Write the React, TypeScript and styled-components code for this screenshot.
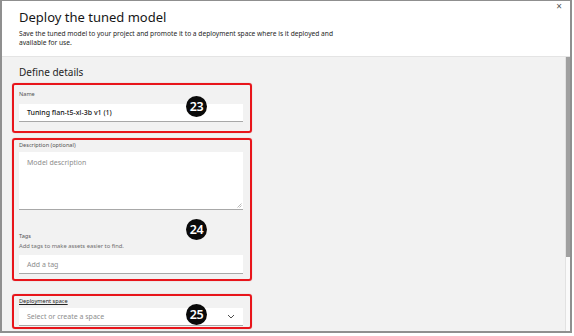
import React from 'react'
import styled, { createGlobalStyle } from 'styled-components'

const GlobalStyle = createGlobalStyle`
    html, body {
        margin: 0;
        padding: 0;
        background: #ffffff;
        font-family: 'Noto Sans', 'Open Sans', sans-serif;
        color: #161616;
    }
    * { box-sizing: border-box; }
`

const Frame = styled.div`
    width: 572px;
    height: 333px;
    border: 2px solid #8f8f8f;
    border-top-width: 1px;
    display: flex;
    flex-direction: column;
    overflow: hidden;
`

const Header = styled.header`
    position: relative;
    height: 56px;
    background: #ffffff;
    padding: 8px 17px 0;
    border-bottom: 1px solid #e4e4e4;
    flex-shrink: 0;
`

const Title = styled.h1`
    margin: 0;
    font-size: 13px;
    font-weight: 400;
    line-height: 17px;
    color: #161616;
`

const Subtitle = styled.p`
    margin: 3px 0 0;
    width: 330px;
    font-size: 6.65px;
    line-height: 9px;
    color: #262626;
`

const Close = styled.span`
    position: absolute;
    top: 0;
    right: 8px;
    font-size: 10px;
    line-height: 10px;
    color: #555;
`

const Body = styled.div`
    flex: 1;
    display: flex;
    background: #f2f2f2;
    min-height: 0;
`

const Content = styled.div`
    flex: 1;
    padding: 8px 0 0 10px;
    display: flex;
    flex-direction: column;
`

const SectionTitle = styled.h2`
    margin: 0 0 4px 7px;
    font-size: 10px;
    font-weight: 400;
    line-height: 14px;
    color: #262626;
`

type TRedBox = { mt?: number; pt?: number; pb?: number }

const RedBox = styled.div<TRedBox>`
    position: relative;
    width: 240px;
    margin-top: ${({ mt = 0 }) => mt}px;
    padding: ${({ pt = 4 }) => pt}px 7px ${({ pb = 4 }) => pb}px 5px;
    border: 2px solid #e8151b;
    border-radius: 3px;
    box-shadow: 0 0 1px rgba(120, 0, 0, 0.4);
    display: flex;
    flex-direction: column;
`

type TLabel = { underline?: boolean; mt?: number }

const Label = styled.label<TLabel>`
    display: block;
    margin-top: ${({ mt = 0 }) => mt}px;
    font-size: 5.6px;
    line-height: 8px;
    color: ${({ underline }) => (underline ? '#262626' : '#525252')};
    text-decoration: ${({ underline }) => (underline ? 'underline' : 'none')};
`

const Helper = styled.div`
    margin-top: 2px;
    font-size: 5.8px;
    line-height: 8px;
    color: #6f6f6f;
`

type TField = { h: number; mt?: number; strong?: boolean }

const Field = styled.div<TField>`
    position: relative;
    height: ${({ h }) => h}px;
    margin-top: ${({ mt = 3 }) => mt}px;
    background: #ffffff;
    border-bottom: 1px solid #a8a8a8;
    padding: 0 8px;
    display: flex;
    align-items: center;
    justify-content: space-between;
    font-size: 7px;
    color: ${({ strong }) => (strong ? '#161616' : '#8d8d8d')};
    font-weight: ${({ strong }) => (strong ? 500 : 400)};
`

const Area = styled(Field)`
    align-items: flex-start;
    padding-top: 6px;
`

const Grip = styled.svg`
    position: absolute;
    right: 1px;
    bottom: 1px;
`

type TBadge = { top: number }

const Badge = styled.div<TBadge>`
    position: absolute;
    left: 172px;
    top: ${({ top }) => top}px;
    width: 21px;
    height: 21px;
    border-radius: 50%;
    background: #0a0a0a;
    color: #ffffff;
    font-size: 12.5px;
    font-weight: 600;
    letter-spacing: -0.5px;
    display: flex;
    align-items: center;
    justify-content: center;
`

const ScrollTrack = styled.div`
    width: 5px;
    flex-shrink: 0;
    background: #fafafa;
    border-left: 1px solid #e2e2e2;
    display: flex;
    flex-direction: column;
`

const ScrollThumb = styled.div`
    height: 200px;
    background: #a0a0a0;
`

const Chevron = () => (
    <svg width="8" height="5" viewBox="0 0 8 5">
        <path d="M1 1 L4 4 L7 1" fill="none" stroke="#393939" strokeWidth="0.9" />
    </svg>
)

export default function App() {
    return (
        <>
            <GlobalStyle />
            <Frame>
                <Header>
                    <Title>Deploy the tuned model</Title>
                    <Subtitle>
                        Save the tuned model to your project and promote it to a deployment space where is it deployed and
                        available for use.
                    </Subtitle>
                    <Close>×</Close>
                </Header>
                <Body>
                    <Content>
                        <SectionTitle>Define details</SectionTitle>

                        <RedBox pt={5} pb={9}>
                            <Label>Name</Label>
                            <Field h={18} mt={6} strong>
                                Tuning flan-t5-xl-3b v1 (1)
                            </Field>
                            <Badge top={11}>23</Badge>
                        </RedBox>

                        <RedBox mt={5} pt={1} pb={5}>
                            <Label>Description (optional)</Label>
                            <Area h={58} mt={3}>
                                Model description
                                <Grip width="5" height="5" viewBox="0 0 5 5">
                                    <path d="M4.5 0.5 L0.5 4.5 M4.5 2.5 L2.5 4.5" stroke="#8d8d8d" strokeWidth="0.6" />
                                </Grip>
                            </Area>
                            <Label mt={22}>Tags</Label>
                            <Helper>Add tags to make assets easier to find.</Helper>
                            <Field h={19} mt={5}>
                                Add a tag
                            </Field>
                            <Badge top={79}>24</Badge>
                        </RedBox>

                        <RedBox mt={13} pt={1} pb={1}>
                            <Label underline>Deployment space</Label>
                            <Field h={18} mt={3}>
                                Select or create a space
                                <Chevron />
                            </Field>
                            <Badge top={8}>25</Badge>
                        </RedBox>
                    </Content>
                    <ScrollTrack>
                        <ScrollThumb />
                    </ScrollTrack>
                </Body>
            </Frame>
        </>
    )
}
